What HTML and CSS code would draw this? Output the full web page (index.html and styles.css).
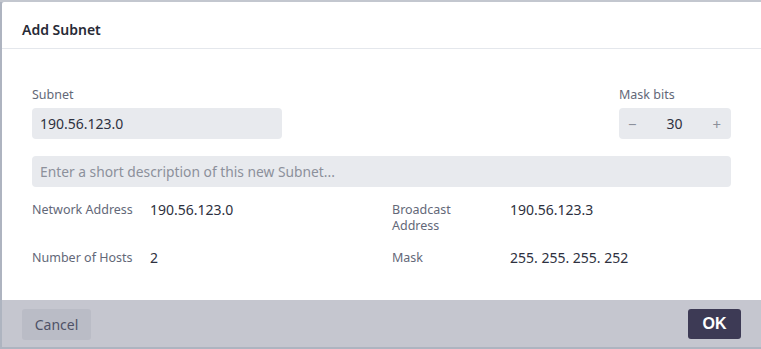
FILE: index.html
```html
<!DOCTYPE html>
<html lang="en">
<head>
  <meta charset="UTF-8">
  <meta name="viewport" content="width=device-width, initial-scale=1.0">
  <title>Add Subnet</title>
  <link rel="stylesheet" href="styles.css">
</head>
<body>
  <!-- Page behind the modal -->
  <div class="page-behind"></div>

  <div class="dialog">
    <header class="dialog-header">
      <h1>Add Subnet</h1>
    </header>

    <section class="dialog-body">
      <div class="subnet-row">
        <div class="field field-subnet">
          <label>Subnet</label>
          <div class="input">190.56.123.0</div>
        </div>
        <div class="field field-mask">
          <label>Mask bits</label>
          <div class="input stepper">
            <span class="step">&minus;</span>
            <span class="step-value">30</span>
            <span class="step">+</span>
          </div>
        </div>
      </div>

      <div class="input placeholder">Enter a short description of this new Subnet...</div>

      <!-- Calculated details -->
      <div class="details">
        <span class="detail-label">Network Address</span>
        <span class="detail-value">190.56.123.0</span>
        <span class="detail-label">Broadcast<br>Address</span>
        <span class="detail-value">190.56.123.3</span>
        <span class="detail-label">Number of Hosts</span>
        <span class="detail-value">2</span>
        <span class="detail-label">Mask</span>
        <span class="detail-value">255. 255. 255. 252</span>
      </div>
    </section>

    <footer class="dialog-footer">
      <button type="button" class="btn btn-cancel">Cancel</button>
      <button type="button" class="btn btn-ok">OK</button>
    </footer>
  </div>
</body>
</html>
```

FILE: styles.css
```css
:root {
  --text-dark: #2e3140;
  --text-muted: #636878;
  --field-bg: #e8eaee;
  --overlay: #c5c6cf;
  --primary: #3d3a55;
}

* {
  margin: 0;
  padding: 0;
  box-sizing: border-box;
}

body {
  font-family: 'Noto Sans', sans-serif;
  color: var(--text-dark);
  background-color: #aeb4c0;
  overflow: hidden;
}

/* Page behind */
.page-behind {
  height: 2px;
  background-color: #c3c7cf;
}

/* Dialog */
.dialog {
  margin-left: 2px;
  background-color: #fff;
  border-top-left-radius: 2px;
}

.dialog-header {
  padding: 20px 20px 10px;
  border-bottom: 1px solid #e4e7ec;
}

.dialog-header h1 {
  font-size: 14px;
  line-height: 16px;
  font-weight: 600;
  color: #272a36;
}

.dialog-body {
  padding: 38px 30px 34px;
}

.subnet-row {
  display: flex;
  justify-content: space-between;
  margin-bottom: 17px;
}

.field label {
  display: block;
  font-size: 12.5px;
  line-height: 16px;
  color: var(--text-muted);
  margin-bottom: 5px;
}

.field-subnet {
  width: 250px;
}

.field-mask {
  width: 112px;
}

.input {
  height: 31px;
  background-color: var(--field-bg);
  border-radius: 4px;
  padding: 0 8px;
  display: flex;
  align-items: center;
  font-size: 14px;
}

.placeholder {
  color: #8c909b;
  font-size: 13.8px;
}

.stepper {
  justify-content: space-between;
  padding: 0 10px 0 9px;
}

.step {
  color: #8c909b;
  font-size: 15px;
}

.step-value {
  font-size: 14px;
}

.details {
  display: grid;
  grid-template-columns: 118px 242px 118px 1fr;
  row-gap: 16px;
  margin-top: 15px;
  line-height: 16px;
}

.detail-label {
  font-size: 12.5px;
  color: var(--text-muted);
}

.detail-value {
  font-size: 14px;
  color: var(--text-dark);
}

/* Footer */
.dialog-footer {
  background-color: var(--overlay);
  height: 47px;
  padding: 9px 20px 0;
  display: flex;
  justify-content: space-between;
  align-items: flex-start;
}

.btn {
  border: none;
  border-radius: 3px;
  height: 31px;
  cursor: pointer;
}

.btn-cancel {
  width: 69px;
  background-color: #babcc6;
  color: #4f5266;
  font-family: 'Noto Sans', sans-serif;
  font-size: 14px;
}

.btn-ok {
  width: 53px;
  height: 30px;
  background-color: var(--primary);
  color: #fff;
  font-family: 'Liberation Sans', sans-serif;
  font-size: 16px;
  font-weight: bold;
}
```
